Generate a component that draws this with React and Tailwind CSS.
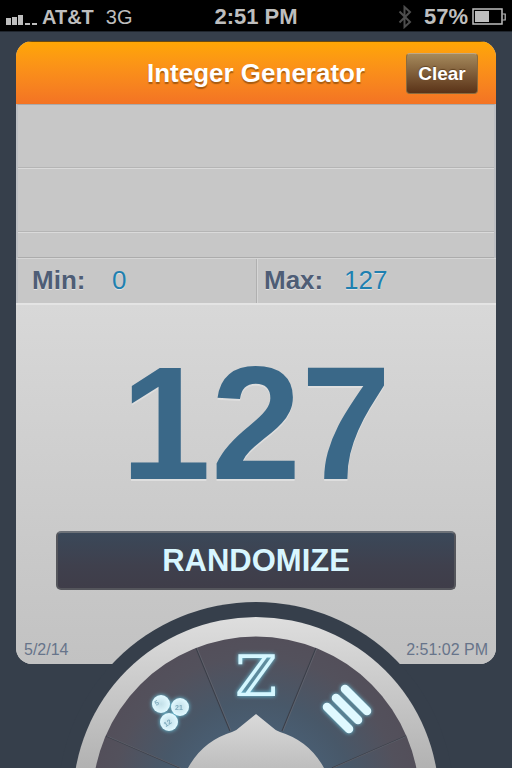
import { useState } from 'react';

const bars = [
  { x: 0, h: 7 },
  { x: 6, h: 8 },
  { x: 12, h: 10 },
  { x: 19, h: 2 },
  { x: 26, h: 2 },
];

const dividers = [
  [140, 48, 174, 131],
  [260, 48, 226, 131],
  [50, 136, 124, 168],
  [350, 136, 276, 168],
];

function StatusBar() {
  return (
    <div className="grid h-8 grid-cols-3 items-center border-b border-[#20262e] bg-black px-[6px] font-bold text-[#bebebe]">
      <div className="flex items-center text-[20px]">
        <svg width="32" height="12" className="mr-1 mt-2 shrink-0" fill="#bebebe">
          {bars.map((b) => (
            <rect key={b.x} x={b.x} y={10 - b.h} width="5" height={b.h} />
          ))}
        </svg>
        <span>AT&amp;T</span>
        <span className="ml-3 font-normal">3G</span>
      </div>
      <div className="text-center text-[22px]">2:51 PM</div>
      <div className="flex items-center justify-end text-[22px]">
        <svg width="14" height="24" viewBox="0 0 14 24" fill="none" stroke="#4d4d4d" strokeWidth="2" className="mr-3">
          <path d="M1.500 6.500 12 17 6.500 22V2L12 7 1.500 17.500" />
        </svg>
        <span>57%</span>
        <svg width="34" height="18" viewBox="0 0 34 18" className="ml-1 shrink-0">
          <path d="M1 1H30V16H1Z" fill="none" stroke="#bebebe" strokeWidth="1.500" />
          <path d="M30.500 6H33.200V12H30.500" fill="none" stroke="#bebebe" strokeWidth="1.200" />
          <rect x="3" y="3" width="14" height="11" fill="#bebebe" />
        </svg>
      </div>
    </div>
  );
}

function Dial() {
  return (
    <nav className="absolute bottom-0 left-1/2 h-[168px] w-[400px] -translate-x-1/2 overflow-hidden">
      <svg width="400" height="168" viewBox="0 0 400 168" className="block">
        <defs>
          <linearGradient id="ring" x1="0" y1="17" x2="0" y2="168" gradientUnits="userSpaceOnUse">
            <stop offset="0" stopColor="#dedede" />
            <stop offset="1" stopColor="#b2b2b2" />
          </linearGradient>
          <linearGradient id="hub" x1="0" y1="114" x2="0" y2="168" gradientUnits="userSpaceOnUse">
            <stop offset="0" stopColor="#dadada" />
            <stop offset="1" stopColor="#bebebe" />
          </linearGradient>
          <radialGradient id="wheel" cx="200" cy="200" r="164" gradientUnits="userSpaceOnUse">
            <stop offset="0.45" stopColor="#495d71" />
            <stop offset="0.6" stopColor="#485869" />
            <stop offset="0.88" stopColor="#53515c" />
            <stop offset="1" stopColor="#534f5a" />
          </radialGradient>
        </defs>
        <circle cx="200" cy="200" r="198" fill="#363f4b" />
        <circle cx="200" cy="200" r="183" fill="url(#ring)" />
        <circle cx="200" cy="200" r="163.500" fill="url(#wheel)" />
        {dividers.map(([x1, y1, x2, y2]) => (
          <g key={`${x1}-${y1}`}>
            <line x1={x1} y1={y1} x2={x2} y2={y2} stroke="#3b3f49" strokeWidth="1.200" />
            <line x1={x1 + 1} y1={y1} x2={x2 + 1} y2={y2} stroke="#6a6b76" strokeWidth="0.600" />
          </g>
        ))}
        <path
          d="M132 168A75 75 0 0 1 176 132Q180 131 184 127L200 114L216 127Q220 131 224 132A75 75 0 0 1 268 168Z"
          fill="url(#hub)"
        />
      </svg>

      <button aria-label="Lottery balls" className="absolute left-[92px] top-[88px]">
        <svg width="44" height="48" viewBox="0 0 44 48" className="drop-shadow-[0_0_2px_#6fd0e8]">
          <defs>
            <radialGradient id="ball">
              <stop offset="0" stopColor="#c2dfe8" />
              <stop offset="1" stopColor="#e2f9ff" />
            </radialGradient>
          </defs>
          <g fill="url(#ball)">
            <circle cx="13" cy="16" r="9" />
            <circle cx="32" cy="19" r="9" />
            <circle cx="21" cy="34" r="9" />
          </g>
          <g fill="#7fabbd" fontSize="7" fontWeight="bold" textAnchor="middle">
            <text transform="translate(10 17) rotate(-30)">5</text>
            <text transform="translate(31 22)">21</text>
            <text transform="translate(21 37) rotate(-35)">12</text>
          </g>
        </svg>
      </button>

      <button className="absolute left-[178px] top-11 flex h-16 w-11 justify-center font-['DejaVu_Serif',serif] text-[57px] leading-[64px] text-[#d5f7ff] drop-shadow-[0_0_2px_#6fd0e8]">
        ℤ
      </button>

      <button aria-label="Lists" className="absolute left-[262px] top-[80px]">
        <svg
          width="56"
          height="56"
          viewBox="0 0 56 56"
          stroke="#e0f9ff"
          strokeWidth="8.500"
          strokeLinecap="round"
          className="drop-shadow-[0_0_2px_#6fd0e8]"
        >
          <path d="M9 27 31 49M18 18 40 40M27 9 49 31" />
        </svg>
      </button>
    </nav>
  );
}

export default function App() {
  const [min, setMin] = useState('0');
  const [max, setMax] = useState('127');
  const [result, setResult] = useState('127');

  const randomize = () => {
    const lo = Number(min) || 0;
    const hi = Number(max) || 0;
    setResult(String(lo + Math.floor(Math.random() * (hi - lo + 1))));
  };

  return (
    <div className="relative flex min-h-screen flex-col overflow-hidden bg-[#363f4b] font-['Liberation_Sans',Arial,sans-serif]">
      <StatusBar />

      <main className="mx-4 mb-26 mt-[9px] flex flex-1 flex-col overflow-hidden rounded-[16px] bg-[#c7c7c7]">
        {/* Header */}
        <header className="grid h-[63px] shrink-0 grid-cols-[1fr_auto_1fr] items-center border-t border-[#6b4a10] bg-linear-to-b from-[#ffa604] to-[#f37324] px-[18px]">
          <h1 className="col-start-2 text-[26px] font-bold text-white [text-shadow:0_2px_1px_rgba(90,50,0,0.5)]">
            Integer Generator
          </h1>
          <button
            onClick={() => setResult('')}
            className="h-[41px] w-[72px] justify-self-end rounded-[4px] border border-[#8a6a3e] border-t-[#c0a884] bg-linear-to-b from-[#a58a5c] to-[#5a3318] pt-[2px] text-[19px] font-bold text-white [text-shadow:0_-1px_1px_rgba(60,30,0,0.5)]"
          >
            Clear
          </button>
        </header>

        {/* Picked numbers, empty for now */}
        <ul className="shrink-0 border-x-2 border-t border-x-[#bcbec2] border-t-[#aaaaaa]">
          <li className="h-16 border-b border-[#dadada] shadow-[inset_0_-1px_0_#b5b5b5]" />
          <li className="h-16 border-b border-[#dadada] shadow-[inset_0_-1px_0_#b5b5b5]" />
          <li className="h-[25px] shadow-[inset_0_-1px_0_#acacac]" />
        </ul>

        <div className="grid h-[45px] shrink-0 grid-cols-2 border-l-2 border-t border-l-[#bcbec2] border-t-[#d6d6d6] text-[26px]">
          <div className="flex items-center border-r border-[#b0b0b0] px-[14px] pb-[2px]">
            <label htmlFor="min" className="w-20 shrink-0 font-bold text-[#4e5d76] [text-shadow:0_1px_0_#e2e2e2]">
              Min:
            </label>
            <input
              id="min"
              value={min}
              onChange={(e) => setMin(e.target.value)}
              className="w-full min-w-0 bg-transparent text-[#1f80b0] outline-none [text-shadow:0_1px_0_#e2e2e2]"
            />
          </div>
          <div className="flex items-center border-l border-[#d6d6d6] px-[6px] pb-[2px]">
            <label htmlFor="max" className="w-20 shrink-0 font-bold text-[#4e5d76] [text-shadow:0_1px_0_#e2e2e2]">
              Max:
            </label>
            <input
              id="max"
              value={max}
              onChange={(e) => setMax(e.target.value)}
              className="w-full min-w-0 bg-transparent text-[#1f80b0] outline-none [text-shadow:0_1px_0_#e2e2e2]"
            />
          </div>
        </div>

        {/* Result */}
        <section className="flex flex-1 flex-col border-t-2 border-[#e4e4e4] bg-linear-to-b from-[#d8d8d8] to-[#c2c2c2]">
          <output className="mt-[38px] h-[160px] text-center text-[162px] font-bold leading-[160px] text-[#3a6888] [text-shadow:0_2px_0_#dedede]">
            {result}
          </output>
          <button
            onClick={randomize}
            className="mx-10 mt-7 h-[59px] rounded-[5px] border-2 border-[#55565c] border-t-[#6c7178] bg-linear-to-b from-[#3a4859] via-[#3f404d] via-60% to-[#3f3d49] pt-[2px] text-[31px] font-bold text-[#d8f6ff]"
          >
            RANDOMIZE
          </button>
          <div className="mt-auto flex justify-between px-2 pb-[2px] text-[16px] text-[#67748a]">
            <span>5/2/14</span>
            <span>2:51:02 PM</span>
          </div>
        </section>
      </main>

      <Dial />
    </div>
  );
}
